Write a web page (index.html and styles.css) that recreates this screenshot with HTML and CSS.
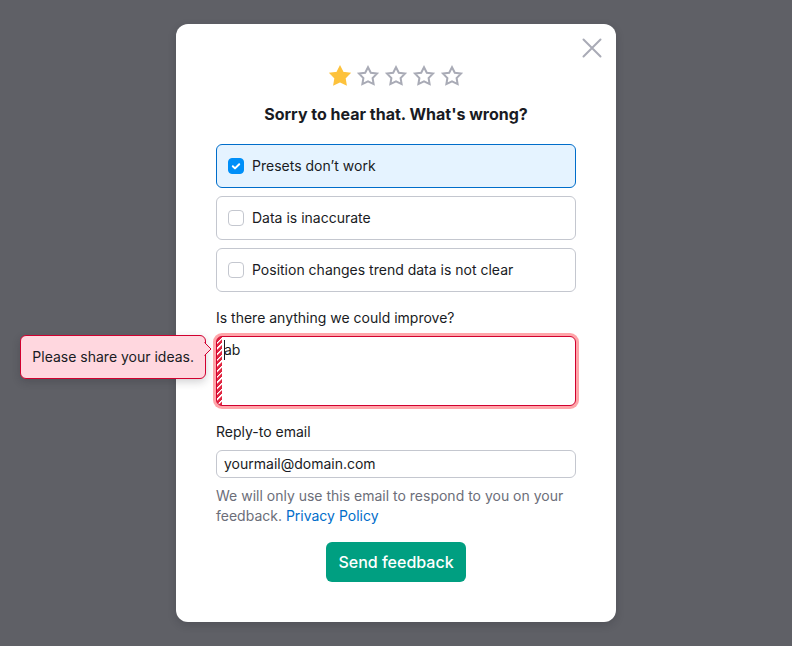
FILE: index.html
```html
<!DOCTYPE html>
<html lang="en">
<head>
<meta charset="utf-8">
<meta name="viewport" content="width=device-width, initial-scale=1">
<title>Feedback</title>
<link rel="stylesheet" href="styles.css">
</head>
<body>
<svg width="0" height="0" class="sprite" aria-hidden="true">
  <symbol id="star" viewBox="0 0 24 24">
    <path d="M12 3.3 14.8 8.8 21 9.6 16.6 14 17.6 20.1 12 17.3 6.4 20.1 7.4 14 3 9.6 9.2 8.8Z" stroke-width="2"/>
  </symbol>
</svg>
<main class="modal" role="dialog" aria-labelledby="title">
  <button class="close" type="button" aria-label="Close">
    <svg viewBox="0 0 20 20" aria-hidden="true"><path d="M1.5 1.5 18.5 18.5M18.5 1.5 1.5 18.5"/></svg>
  </button>
  <form class="form">
    <div class="stars">
      <button class="star star-on" type="button" aria-label="1 star"><svg><use href="#star"/></svg></button>
      <button class="star" type="button" aria-label="2 stars"><svg><use href="#star"/></svg></button>
      <button class="star" type="button" aria-label="3 stars"><svg><use href="#star"/></svg></button>
      <button class="star" type="button" aria-label="4 stars"><svg><use href="#star"/></svg></button>
      <button class="star" type="button" aria-label="5 stars"><svg><use href="#star"/></svg></button>
    </div>
    <h1 class="title" id="title">Sorry to hear that. What's wrong?</h1>
    <div class="options">
      <label class="option">
        <span class="check"><input type="checkbox" checked><svg viewBox="0 0 16 16" aria-hidden="true"><path d="M4.8 8.2 7 10.4 11.2 6.2"/></svg></span>
        Presets don’t work
      </label>
      <label class="option">
        <span class="check"><input type="checkbox"></span>
        Data is inaccurate
      </label>
      <label class="option">
        <span class="check"><input type="checkbox"></span>
        Position changes trend data is not clear
      </label>
    </div>
    <div class="field">
      <label for="ideas">Is there anything we could improve?</label>
      <div class="area">
        <textarea id="ideas" aria-describedby="ideas-error">ab</textarea>
        <span class="caret"></span>
        <div class="tooltip" id="ideas-error" role="alert">Please share your ideas.<svg class="arrow" viewBox="0 0 8 14" aria-hidden="true"><path class="arrow-fill" d="M0 0 7 7 0 14Z"/><path class="arrow-line" d="M.5 .5 7 7 .5 13.5"/></svg></div>
      </div>
    </div>
    <div class="field">
      <label for="email">Reply-to email</label>
      <input class="text" id="email" type="email" value="yourmail@domain.com">
      <p class="note">We will only use this email to respond to you on your feedback. <a href="#">Privacy Policy</a></p>
    </div>
    <button class="submit" type="submit">Send feedback</button>
  </form>
</main>
</body>
</html>
```
FILE: styles.css
```css
* {
  box-sizing: border-box;
}

body {
  margin: 0;
  min-height: 100vh;
  padding: 24px;
  display: flex;
  align-items: center;
  justify-content: center;
  background: #5f6066;
  color: #191b23;
  font: 14px/20px Inter, "Liberation Sans", sans-serif;
}

button,
input,
textarea {
  font: inherit;
  color: inherit;
  margin: 0;
}

.sprite {
  position: absolute;
}

.modal {
  position: relative;
  width: 100%;
  max-width: 440px;
  padding: 40px;
  background: #fff;
  border-radius: 12px;
  box-shadow: 0 3px 8px rgba(25, 27, 35, 0.2);
}

.close {
  position: absolute;
  top: 14px;
  right: 14px;
  width: 20px;
  height: 20px;
  padding: 0;
  border: 0;
  background: none;
}

.close svg {
  display: block;
  stroke: #a9abb6;
  stroke-width: 2;
  stroke-linecap: round;
}

.form {
  display: flex;
  flex-direction: column;
}

.stars {
  display: flex;
  justify-content: center;
  gap: 4px;
}

.star {
  width: 24px;
  height: 24px;
  padding: 0;
  border: 0;
  background: none;
  fill: none;
  stroke: #a9abb6;
}

.star svg {
  display: block;
  width: 24px;
  height: 24px;
}

.star-on {
  fill: #fdc23c;
  stroke: #fdc23c;
}

.title {
  margin: 14px 0 18px;
  font-size: 16px;
  line-height: 24px;
  font-weight: 700;
  text-align: center;
}

.options {
  display: flex;
  flex-direction: column;
  gap: 8px;
  margin-bottom: 16px;
}

.option {
  display: flex;
  align-items: center;
  gap: 8px;
  padding: 11px;
  border: 1px solid #c4c7cf;
  border-radius: 6px;
}

.option:has(:checked) {
  background: #e5f3ff;
  border-color: #006dca;
}

.check {
  display: grid;
}

.check input,
.check svg {
  grid-area: 1 / 1;
  width: 16px;
  height: 16px;
}

.check input {
  appearance: none;
  background: #fff;
  border: 1px solid #c4c7cf;
  border-radius: 4px;
}

.check input:checked {
  background: #008ff8;
  border-color: #008ff8;
}

.check svg {
  fill: none;
  stroke: #fff;
  stroke-width: 2;
  stroke-linecap: round;
  stroke-linejoin: round;
  pointer-events: none;
}

.field {
  display: flex;
  flex-direction: column;
  gap: 8px;
  margin-bottom: 16px;
}

.area {
  position: relative;
}

.area textarea {
  display: block;
  width: 100%;
  height: 70px;
  padding: 3px 7px;
  resize: none;
  outline: 0;
  border: 1px solid #d1002f;
  border-radius: 6px;
  background: repeating-linear-gradient(-45deg, #e0243f 0 2px, #fff 3px 4px) left / 5px 100% no-repeat #fff;
  box-shadow: 0 0 0 3px #ffa5a9;
}

.caret {
  position: absolute;
  top: 4px;
  left: 8px;
  width: 1px;
  height: 20px;
  background: #191b23;
}

.tooltip {
  position: absolute;
  top: -1px;
  right: calc(100% + 10px);
  padding: 11px;
  white-space: nowrap;
  background: #ffd7df;
  border: 1px solid #d1002f;
  border-radius: 6px;
  box-shadow: 0 3px 8px rgba(25, 27, 35, 0.2);
}

.arrow {
  position: absolute;
  left: calc(100% - 1px);
  top: 6px;
  width: 8px;
  height: 14px;
}

.arrow-fill {
  fill: #ffd7df;
}

.arrow-line {
  fill: none;
  stroke: #d1002f;
}

.text {
  width: 100%;
  height: 28px;
  padding: 0 7px 2px;
  border: 1px solid #c4c7cf;
  border-radius: 6px;
  background: #fff;
}

.note {
  margin: 0;
  color: #6c6e79;
}

.note a {
  color: #006dca;
  text-decoration: none;
}

.submit {
  align-self: center;
  padding: 8px 12px;
  border: 0;
  border-radius: 6px;
  background: #009f81;
  color: #fff;
  font-size: 16px;
  line-height: 24px;
  font-weight: 500;
}
```
